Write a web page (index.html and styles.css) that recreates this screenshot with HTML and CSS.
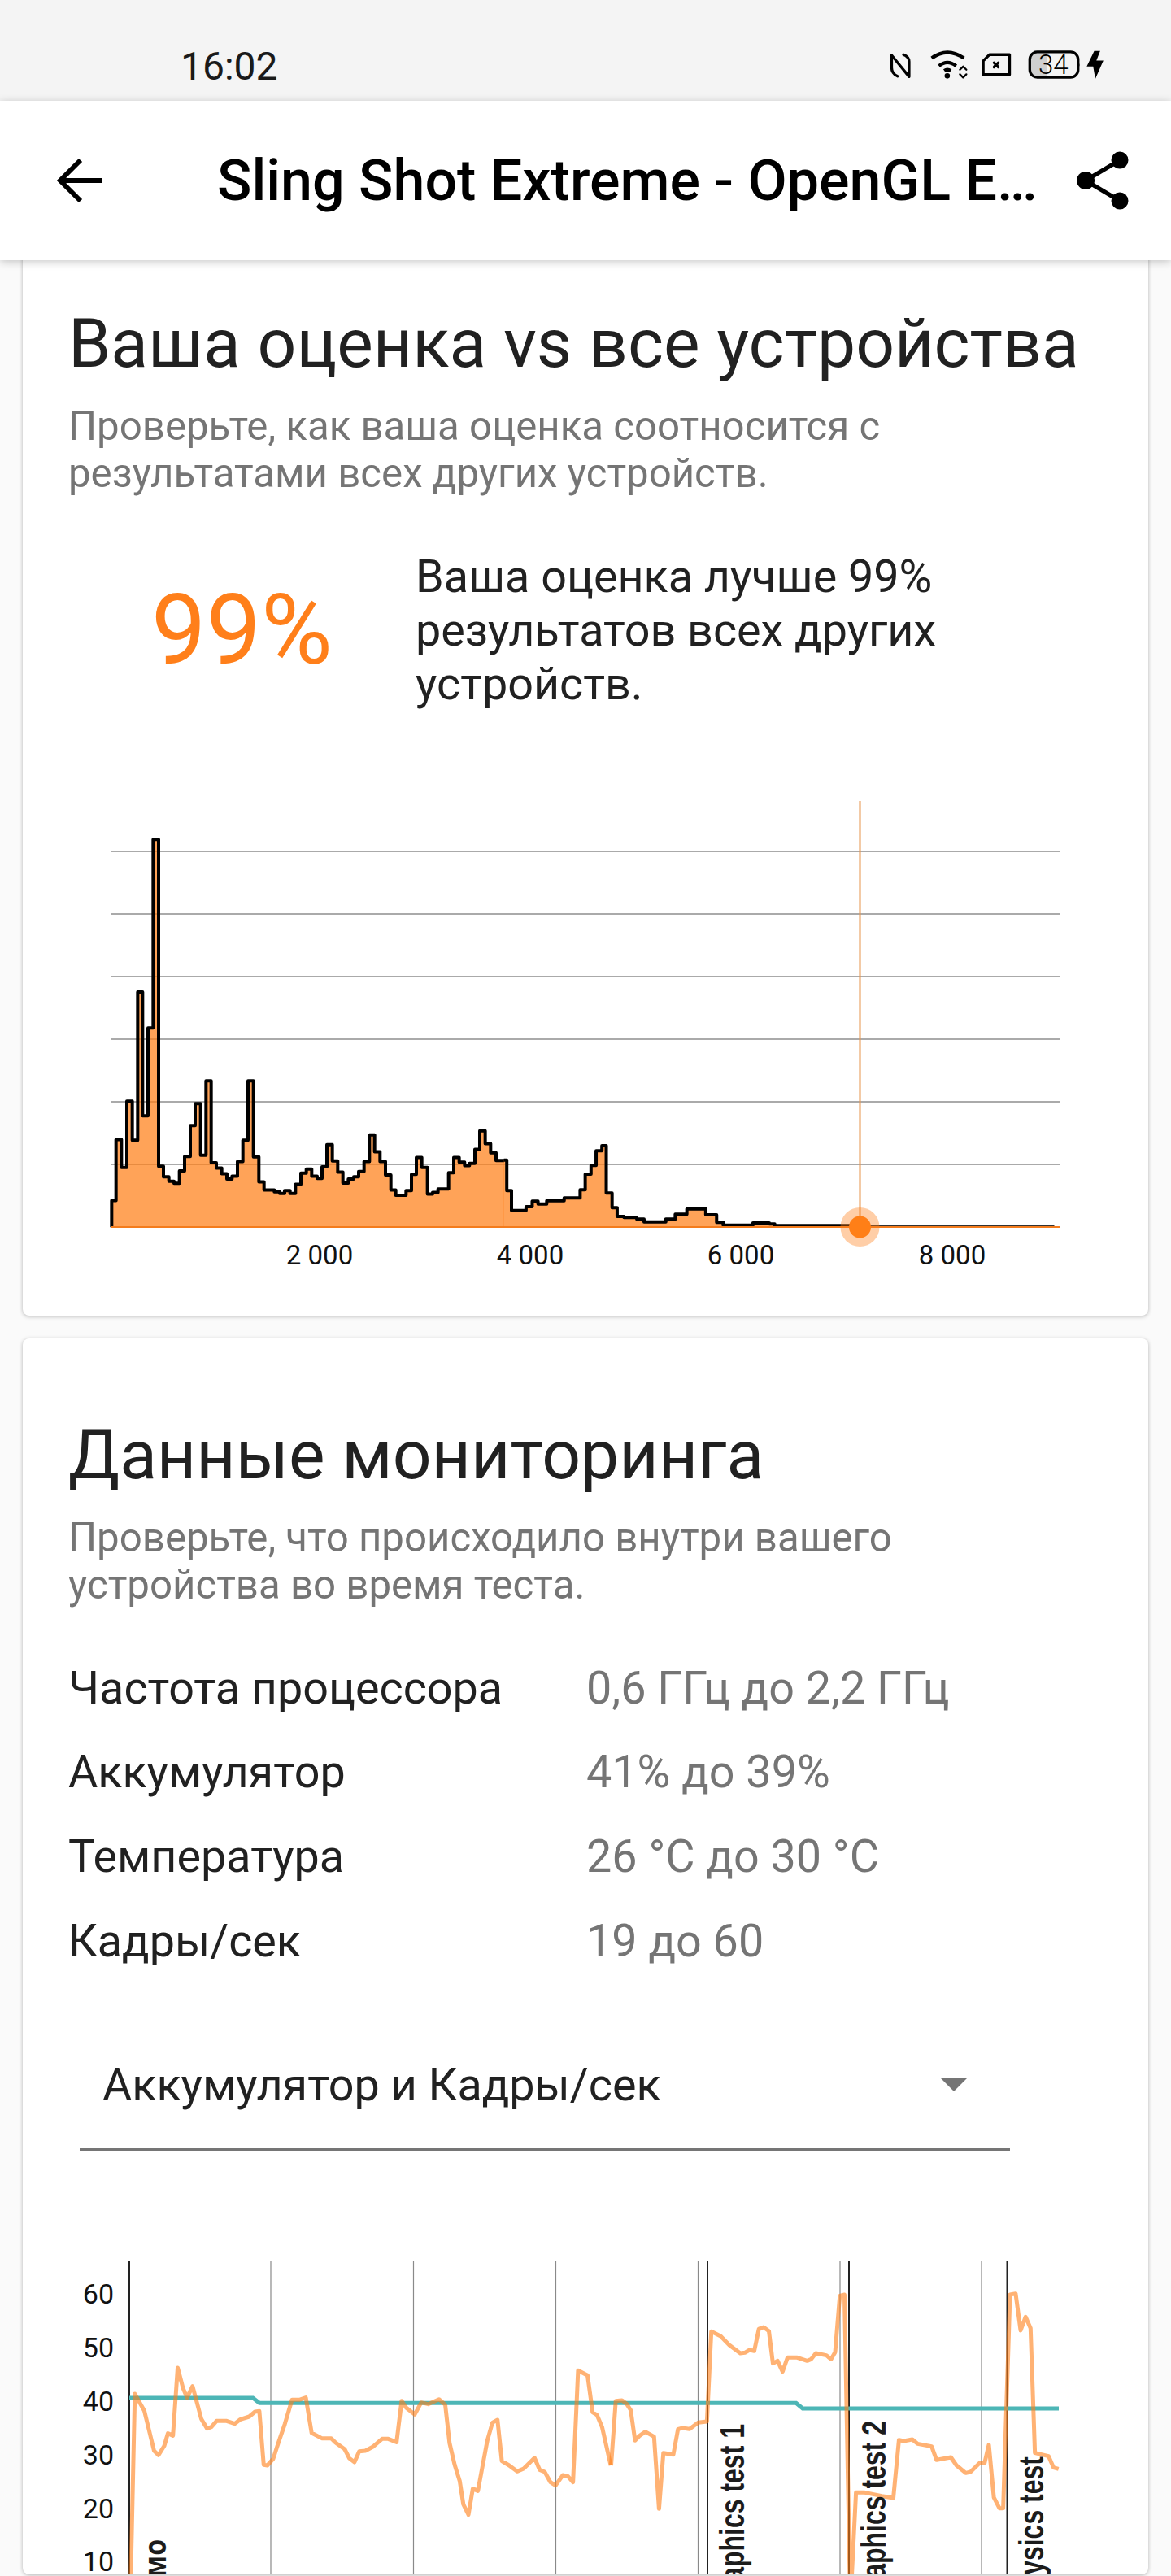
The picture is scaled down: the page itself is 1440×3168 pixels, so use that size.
FILE: index.html
```html
<!DOCTYPE html>
<html lang="ru">
<head>
<meta charset="utf-8">
<title>Sling Shot Extreme</title>
<link rel="stylesheet" href="styles.css">
</head>
<body>
<div class="status">
  <span class="time">16:02</span>
  <svg class="status-icons" viewBox="90 60 810 115" width="270" height="38">
    <path class="si" d="M128 162 Q106 152 106 130 V84 L171 164 V108 Q171 90 150 82"/>
    <path class="si wide" d="M255 95 Q313 52 375 95 M282 124 Q313 98 346 124 M302 142 Q313 134 326 142"/>
    <circle cx="313" cy="161" r="10"/>
    <path class="si thin" d="M360 138 L372 126 L384 138 M360 155 L372 167 L384 155"/>
    <path class="si" d="M470 82 H545 V156 H447 V105 Z"/>
    <path class="si" d="M487 112 L503 128 M503 112 L487 128"/>
    <path class="batt-fill" d="M648 72 H685 V166 H648 Q620 166 620 138 V100 Q620 72 648 72 Z"/>
    <rect class="si" x="620" y="72" width="180" height="94" rx="28"/>
    <path d="M798 100 Q812 119 798 138 Z"/>
    <text class="batt-text" x="708" y="155">34</text>
    <path d="M860 68 L832 126 H856 L864 172 L894 104 H868 L882 68 Z"/>
  </svg>
</div>
<header class="appbar">
  <svg class="back" viewBox="0 0 66 60" width="66" height="60">
    <path class="ico" d="M60 30 H9 M34 5 L9 30 L34 55"/>
  </svg>
  <h1 class="title">Sling Shot Extreme - OpenGL E…</h1>
  <svg class="share" viewBox="0 0 70 74" width="70" height="74">
    <path class="ico thin5" d="M13 37 L55 12 M13 37 L55 62"/>
    <circle cx="13" cy="37" r="11"/>
    <circle cx="55" cy="12" r="10.5"/>
    <circle cx="55" cy="62" r="10.5"/>
  </svg>
</header>
<main class="content">
  <section class="card first">
    <div class="text">
      <h2 class="heading">Ваша оценка vs все устройства</h2>
      <p class="sub">Проверьте, как ваша оценка соотносится с<br>результатами всех других устройств.</p>
      <div class="score">
        <div class="pct">99%</div>
        <p class="score-text">Ваша оценка лучше 99%<br>результатов всех других<br>устройств.</p>
      </div>
    </div>
    <svg class="chart-a" viewBox="28 980 1384 610" width="1384" height="610">
      <path class="grid" d="M136 1047 H1303 M136 1124 H1303 M136 1201 H1303 M136 1278 H1303 M136 1355 H1303 M136 1432 H1303"/>
      <g transform="translate(120 980) scale(.33333 .35714)">
        <path class="hist-fill" d="M52 1482 V1390 H68 V1180 H88 V1276 H108 V1048 H128 V1182 H148 V672 H166 V1098 H186 V796 H205 V146 H225 V1272 H243 V1308 H263 V1324 H282 V1331 H302 V1288 H321 V1238 H342 V1132 H360 V1056 H380 V1234 H400 V978 H419 V1260 H438 V1278 H458 V1298 H477 V1316 H496 V1306 H516 V1256 H536 V1182 H555 V978 H575 V1240 H595 V1326 H614 V1354 H652 V1360 H672 V1366 H690 V1356 H710 V1366 H730 V1334 H750 V1296 H770 V1282 H790 V1306 H810 V1314 H828 V1274 H846 V1198 H866 V1254 H886 V1292 H905 V1330 H925 V1316 H945 V1308 H963 V1290 H983 V1256 H1003 V1164 H1022 V1222 H1042 V1256 H1062 V1302 H1082 V1354 H1100 V1372 H1138 V1356 H1158 V1300 H1176 V1242 H1196 V1276 H1217 V1368 H1236 V1362 H1256 V1350 H1295 V1294 H1314 V1242 H1334 V1258 H1354 V1270 H1372 V1262 H1392 V1214 H1410 V1150 H1430 V1194 H1450 V1226 H1470 V1252 H1500 V1482 Z"/>
        <path class="hist-line" vector-effect="non-scaling-stroke" d="M52 1482 V1390 H68 V1180 H88 V1276 H108 V1048 H128 V1182 H148 V672 H166 V1098 H186 V796 H205 V146 H225 V1272 H243 V1308 H263 V1324 H282 V1331 H302 V1288 H321 V1238 H342 V1132 H360 V1056 H380 V1234 H400 V978 H419 V1260 H438 V1278 H458 V1298 H477 V1316 H496 V1306 H516 V1256 H536 V1182 H555 V978 H575 V1240 H595 V1326 H614 V1354 H652 V1360 H672 V1366 H690 V1356 H710 V1366 H730 V1334 H750 V1296 H770 V1282 H790 V1306 H810 V1314 H828 V1274 H846 V1198 H866 V1254 H886 V1292 H905 V1330 H925 V1316 H945 V1308 H963 V1290 H983 V1256 H1003 V1164 H1022 V1222 H1042 V1256 H1062 V1302 H1082 V1354 H1100 V1372 H1138 V1356 H1158 V1300 H1176 V1242 H1196 V1276 H1217 V1368 H1236 V1362 H1256 V1350 H1295 V1294 H1314 V1242 H1334 V1258 H1354 V1270 H1372 V1262 H1392 V1214 H1410 V1150 H1430 V1194 H1450 V1226 H1470 V1252 H1500"/>
      </g>
      <g transform="translate(600 1200) scale(.44643 .33333)">
        <path class="hist-fill" d="M44 680 H52 V793 H65 V866 H105 V852 H122 V832 H138 V842 H162 V830 H210 V820 H254 V790 H268 V732 H284 V700 H298 V646 H314 V627 H326 V802 H342 V856 H356 V888 H375 V892 H410 V898 H430 V908 H490 V898 H516 V880 H548 V860 H600 V882 H630 V910 H648 V920 H730 V912 H775 V916 H790 V922 H1560 V928 H44 Z"/>
        <path class="hist-line" vector-effect="non-scaling-stroke" d="M44 680 H52 V793 H65 V866 H105 V852 H122 V832 H138 V842 H162 V830 H210 V820 H254 V790 H268 V732 H284 V700 H298 V646 H314 V627 H326 V802 H342 V856 H356 V888 H375 V892 H410 V898 H430 V908 H490 V898 H516 V880 H548 V860 H600 V882 H630 V910 H648 V920 H730 V912 H775 V916 H790 V922 H1000"/>
        <path class="hist-thin" vector-effect="non-scaling-stroke" d="M1000 922 H1560"/>
      </g>
      <path class="base" d="M136 1509 H1303"/>
      <path class="marker-line" d="M1057.5 985 V1509"/>
      <circle class="halo" cx="1057.5" cy="1509" r="24"/>
      <circle class="dot" cx="1057.5" cy="1509" r="13.5"/>
      <g class="axis">
        <text x="393" y="1555">2 000</text>
        <text x="652" y="1555">4 000</text>
        <text x="911" y="1555">6 000</text>
        <text x="1171" y="1555">8 000</text>
      </g>
    </svg>
  </section>
  <section class="card second">
    <div class="text">
      <h2 class="heading">Данные мониторинга</h2>
      <p class="sub">Проверьте, что происходило внутри вашего<br>устройства во время теста.</p>
      <dl class="stats">
        <dt>Частота процессора</dt><dd>0,6 ГГц до 2,2 ГГц</dd>
        <dt>Аккумулятор</dt><dd>41% до 39%</dd>
        <dt>Температура</dt><dd>26 °C до 30 °C</dd>
        <dt>Кадры/сек</dt><dd>19 до 60</dd>
      </dl>
      <div class="select">
        <span>Аккумулятор и Кадры/сек</span>
        <i class="caret"></i>
      </div>
    </div>
    <svg class="chart-b" viewBox="28 2770 1384 398" width="1384" height="398">
      <path class="vgrid" d="M333 2783 V3168 M508.5 2783 V3168 M683.5 2783 V3168 M858.5 2783 V3168 M1033 2783 V3168 M1207 2783 V3168"/>
      <path class="vmark" d="M159 2783 V3168 M870 2783 V3168 M1044 2783 V3168 M1238.5 2783 V3168"/>
      <g class="ylab">
        <text x="140" y="2835">60</text>
        <text x="140" y="2901">50</text>
        <text x="140" y="2967">40</text>
        <text x="140" y="3033">30</text>
        <text x="140" y="3099">20</text>
        <text x="140" y="3164">10</text>
      </g>
      <path class="teal" d="M159 2951 H311 L319 2957.3 H979 L987 2964 H1302"/>
      <g transform="translate(60 2760) scale(.44643 .33333)">
        <path class="fps" vector-effect="non-scaling-stroke" d="M226 1224 L237 558 L263 620 L290 768 L302 784 L318 750 L328 704 L342 712 L355 462 L370 538 L381 572 L396 530 L420 650 L436 686 L448 680 L462 658 L490 658 L512 668 L528 652 L552 642 L568 624 L580 622 L592 820 L602 822 L618 798 L632 740 L650 670 L670 580 L690 580 L708 572 L724 702 L752 722 L778 722 L790 738 L815 762 L828 796 L842 810 L855 770 L872 768 L892 754 L918 724 L935 724 L958 736 L972 584 L985 610 L1008 634 L1026 590 L1045 596 L1075 578 L1092 598 L1104 740 L1118 820 L1132 880 L1142 966 L1156 1004 L1168 908 L1182 916 L1194 830 L1208 730 L1222 664 L1236 654 L1248 806 L1268 822 L1290 844 L1308 834 L1338 794 L1352 838 L1366 846 L1382 884 L1396 896 L1416 858 L1430 862 L1444 884 L1458 472 L1484 490 L1498 626 L1510 636 L1524 680 L1548 822"/>
      </g>
      <g transform="translate(740 2760) scale(.38265 .33333)">
        <path class="fps" vector-effect="non-scaling-stroke" d="M30 822 L45 584 L65 582 L80 595 L93 618 L107 730 L122 712 L140 698 L168 716 L184 982 L198 776 L230 782 L245 688 L260 684 L282 688 L310 664 L338 660 L352 328 L382 345 L410 378 L445 408 L460 406 L475 396 L490 400 L505 318 L520 312 L537 326 L550 446 L565 436 L581 476 L597 424 L628 424 L660 436 L673 430 L688 408 L722 416 L737 430 L750 404 L765 196 L780 192 L797 1240 M803 1240 L817 922 L845 922 L900 935 L937 942 L955 728 L970 732 L998 726 L1015 742 L1060 752 L1076 802 L1122 792 L1140 822 L1170 850 L1185 846 L1215 812 L1230 814 L1244 746 L1260 940 L1278 980 L1290 980 L1312 192 L1330 188 L1346 324 L1362 274 L1378 316 L1392 776 L1436 788 L1452 830 L1468 835"/>
      </g>
      <text class="lab-demo" transform="translate(204 3125) rotate(-90) scale(1 1.2)">Демо</text>
      <text class="lab" transform="translate(914.5 2983) rotate(-90) scale(1 1.3)">Graphics test 1</text>
      <text class="lab" transform="translate(1089 2979) rotate(-90) scale(1 1.3)">Graphics test 2</text>
      <text class="lab" transform="translate(1283 3023) rotate(-90) scale(1 1.3)">Physics test</text>
    </svg>
  </section>
</main>
</body>
</html>
```

FILE: styles.css
```css
* { box-sizing: border-box; }
html, body { margin: 0; padding: 0; }
body {
  width: 1440px;
  height: 3168px;
  overflow: hidden;
  background: #fafafa;
  font-family: Roboto, "Noto Sans", sans-serif;
  color: #212121;
}
.status {
  height: 124px;
  background: #f4f4f4;
  display: flex;
  justify-content: space-between;
  align-items: flex-start;
  padding: 60px 80px 0 222px;
}
.time { font-size: 48px; line-height: 44px; color: #1a1a1a; }
.status-icons { display: block; }
.si { fill: none; stroke: #000; stroke-width: 10; stroke-linejoin: round; stroke-linecap: round; }
.si.wide { stroke-width: 13; stroke-linecap: butt; }
.si.thin { stroke-width: 7; }
.batt-fill { fill: #cfcfcf; }
.batt-text { font-size: 100px; font-weight: 300; text-anchor: middle; fill: #000; font-family: Roboto, sans-serif; }
.appbar {
  position: relative;
  z-index: 2;
  height: 196px;
  background: #fff;
  box-shadow: 0 2px 10px rgba(0, 0, 0, .22);
  display: flex;
  align-items: center;
  padding: 0 0 0 65px;
}
.back { flex: none; }
.title {
  flex: none;
  width: 1013px;
  margin: 0 0 0 136px;
  font-size: 70px;
  font-weight: 500;
  line-height: 84px;
  color: #000;
  white-space: nowrap;
}
.share { flex: none; margin-left: 42px; }
.ico { fill: none; stroke: #000; stroke-width: 6; }
.thin5 { stroke-width: 5.5; }
.content { margin-top: -16px; padding: 0 28px; }
.card {
  background: #fff;
  border-radius: 8px;
  box-shadow: 0 1px 5px rgba(0, 0, 0, .28);
}
.card.first { padding: 69px 0 28px; }
.card.second { margin-top: 28px; padding-top: 94px; }
.text { padding: 0 56px; }
.heading { margin: 0; font-size: 84px; font-weight: 400; line-height: 100px; }
.sub { margin: 22px 0 0; font-size: 49.2px; line-height: 58px; color: #757575; }
.score { display: flex; align-items: center; margin-top: 65px; }
.pct { flex: none; width: 427px; text-align: center; font-size: 120px; line-height: 140px; color: #ff7f1a; }
.score-text { margin: 0; font-size: 55.7px; line-height: 66px; }
.chart-a { display: block; margin-top: 106px; }
.chart-b { display: block; margin-top: 123px; }
.grid { fill: none; stroke: #8f8f8f; stroke-width: 1.5; }
.hist-fill { fill: #ff7f17; fill-opacity: .72; }
.hist-line { fill: none; stroke: #000; stroke-width: 4; stroke-linejoin: round; }
.hist-thin { fill: none; stroke: #333; stroke-width: 1.5; }
.base { fill: none; stroke: #f47c1c; stroke-width: 2; }
.marker-line { fill: none; stroke: #e8964f; stroke-width: 2; }
.halo { fill: #ff7f17; fill-opacity: .38; }
.dot { fill: #ff7f17; }
.axis text { font-size: 33px; text-anchor: middle; fill: #111; }
.ylab text { font-size: 34px; text-anchor: end; fill: #111; }
.stats {
  display: grid;
  grid-template-columns: 637px 1fr;
  grid-auto-rows: 103.6px;
  align-items: center;
  margin: 46px 0 0;
}
.stats dt { font-size: 55.7px; color: #212121; }
.stats dd { margin: 0; font-size: 55.7px; color: #757575; }
.select {
  display: flex;
  align-items: center;
  justify-content: space-between;
  width: 1144px;
  height: 157px;
  margin: 50px 0 0 14px;
  padding: 0 52px 3px 28px;
  border-bottom: 3px solid #757575;
  font-size: 55.7px;
}
.caret {
  width: 0;
  height: 0;
  border-left: 17px solid transparent;
  border-right: 17px solid transparent;
  border-top: 17px solid #757575;
}
.vgrid { fill: none; stroke: #8a8a8a; stroke-width: 1.2; }
.vmark { fill: none; stroke: #222; stroke-width: 2; }
.teal { fill: none; stroke: #4db6b6; stroke-width: 5; }
.fps { fill: none; stroke: #ff7f17; stroke-opacity: .6; stroke-width: 5; stroke-linejoin: round; }
.lab { font-family: "Liberation Sans", Arial, sans-serif; font-weight: 700; font-size: 32px; text-anchor: end; fill: #1c1c1c; }
.lab-demo { font-family: "Noto Sans", sans-serif; font-weight: 700; font-size: 32px; text-anchor: end; fill: #1c1c1c; }
```
